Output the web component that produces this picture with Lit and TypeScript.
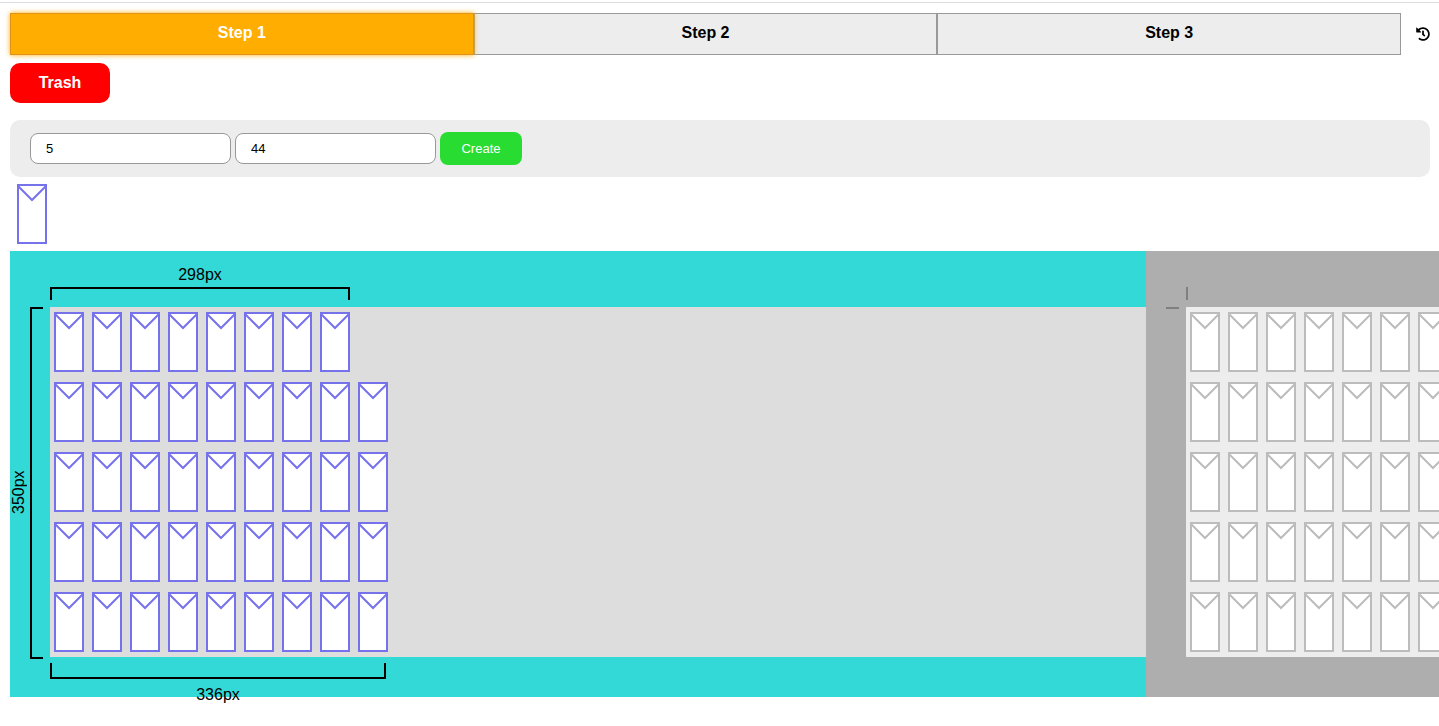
import { LitElement, html, css, svg } from "lit";
import { customElement, property, state } from "lit/decorators.js";
import { classMap } from "lit/directives/class-map.js";

@customElement("envelope-card")
class EnvelopeCard extends LitElement {
  static styles = css`
    :host {
      display: block;
      flex: none;
      width: 30px;
      height: 60px;
      margin: 5px 4px;
      color: #7672ec;
    }
    .shape {
      display: block;
      width: 100%;
      height: 100%;
    }
  `;

  render() {
    return html`<svg class="shape" viewBox="0 0 30 60" aria-hidden="true">
      <rect x="1" y="1" width="28" height="58" fill="#fff" stroke="currentColor" stroke-width="2" />
      <path d="M1 2L15 16L29 2" fill="none" stroke="currentColor" stroke-width="2" />
    </svg>`;
  }
}

@customElement("envelope-board")
class EnvelopeBoard extends LitElement {
  @property({ attribute: false }) rows: number[] = [];
  @property({ type: Boolean, reflect: true }) inactive = false;

  static styles = css`
    :host {
      display: grid;
      grid-template-columns: 20px 20px minmax(0, 1fr);
      grid-template-rows: 36px 20px auto 40px;
      background: #33d9d6;
      color: #000;
    }
    :host([inactive]) {
      background: #aeaeae;
      color: #808080;
    }
    .field {
      grid-column: 3;
      grid-row: 3;
      background: #dddddd;
    }
    :host([inactive]) .field {
      background: #ededed;
    }
    :host([inactive]) envelope-card {
      color: #bcbcbc;
    }
    .row {
      display: flex;
    }
    .label {
      text-align: center;
      line-height: 20px;
    }
    .top-label {
      grid-column: 3;
      grid-row: 1;
      align-self: end;
      padding-bottom: 2px;
    }
    .top {
      grid-column: 3;
      grid-row: 2;
      height: 13px;
      box-sizing: border-box;
      border: 2px solid;
      border-bottom: 0;
    }
    .side-label {
      grid-column: 1;
      grid-row: 3;
      justify-self: start;
      writing-mode: vertical-rl;
      transform: rotate(180deg);
      line-height: 18px;
      padding-bottom: 20px;
    }
    .side {
      grid-column: 2;
      grid-row: 3;
      width: 13px;
      box-sizing: border-box;
      margin-bottom: -2px;
      border: 2px solid;
      border-right: 0;
    }
    .bottom {
      grid-column: 3;
      grid-row: 4;
      height: 40px;
      padding-top: 6px;
      box-sizing: border-box;
    }
    .bracket {
      height: 16px;
      box-sizing: border-box;
      border: 2px solid;
      border-top: 0;
      margin-bottom: 6px;
    }
    .tick-top {
      grid-column: 3;
      grid-row: 2;
      width: 2px;
      height: 13px;
      background: currentColor;
    }
    .tick-side {
      grid-column: 2;
      grid-row: 3;
      width: 13px;
      height: 2px;
      background: currentColor;
    }
  `;

  private renderRulers() {
    if (this.inactive) {
      return html`<div class="tick-top"></div><div class="tick-side"></div>`;
    }
    const first = this.rows[0] * 38 - 6;
    const last = this.rows[this.rows.length - 1] * 38 - 6;
    return html`
      <div class="label top-label" style="width:${first + 2}px">${first}px</div>
      <div class="top" style="width:${first + 2}px"></div>
      <div class="label side-label">${this.rows.length * 70}px</div>
      <div class="side"></div>
      <div class="bottom" style="width:${last}px">
        <div class="bracket"></div>
        <div class="label">${last}px</div>
      </div>
    `;
  }

  render() {
    return html`
      ${this.renderRulers()}
      <div class="field">
        ${this.rows.map(
          (count) => html`<div class="row">
            ${Array.from({ length: count }, () => html`<envelope-card></envelope-card>`)}
          </div>`
        )}
      </div>
    `;
  }
}

const historyIcon = svg`<path fill="currentColor" d="M504 255.531c.253 136.64-111.18 248.372-247.82 248.468-59.015.042-113.223-20.53-155.822-54.911-11.077-8.94-11.905-25.541-1.839-35.607l11.267-11.267c8.609-8.609 22.353-9.551 31.891-1.984C173.062 425.135 212.781 440 256 440c101.705 0 184-82.311 184-184 0-101.705-82.311-184-184-184-48.814 0-93.149 18.969-126.068 49.932l50.754 50.754c10.08 10.08 2.941 27.314-11.313 27.314H24c-8.837 0-16-7.163-16-16V38.627c0-14.254 17.234-21.393 27.314-11.314l49.372 49.372C129.209 34.136 189.552 8 256 8c136.81 0 247.747 110.78 248 247.531zm-180.912 78.784l9.823-12.63c8.138-10.463 6.253-25.542-4.21-33.679L288 256.349V152c0-13.255-10.745-24-24-24h-16c-13.255 0-24 10.745-24 24v135.651l65.409 50.874c10.463 8.137 25.541 6.253 33.679-4.21z"/>`;

@customElement("app-root")
class AppRoot extends LitElement {
  @state() private step = 0;
  @state() private rows = [8, 9, 9, 9, 9];

  static styles = css`
    :host {
      display: block;
      box-sizing: border-box;
      min-height: 100vh;
      padding: 2px 0 20px;
      overflow-x: clip;
      background: #fff;
      color: #000;
      font: 16px/20px "Liberation Sans", Arial, sans-serif;
    }
    button,
    input {
      font-family: inherit;
      margin: 0;
      box-sizing: border-box;
    }
    button {
      border: 0;
      cursor: pointer;
    }
    .header {
      display: flex;
      align-items: center;
      gap: 15px;
      border-top: 1px solid #dcdde0;
      padding: 10px 9px 0 10px;
    }
    .steps {
      display: flex;
      flex: 1;
    }
    .step {
      flex: 1 1 0;
      height: 42px;
      padding: 0 0 2px;
      border: 1px solid #999;
      background: #ededed;
      color: #000;
      font-size: 16px;
      font-weight: 700;
    }
    .step.active {
      position: relative;
      background: #ffad00;
      border-color: #e0921a;
      color: #fff;
      box-shadow: 0 0 5px #ffad00;
    }
    .history {
      display: flex;
      padding: 0;
      background: none;
      color: #000;
    }
    .history svg {
      width: 14px;
      height: 14px;
    }
    .content {
      padding: 8px 9px 0 10px;
    }
    .trash {
      display: block;
      width: 100px;
      height: 40px;
      border-radius: 10px;
      background: #f00;
      color: #fff;
      font-size: 16px;
      font-weight: 700;
    }
    .toolbar {
      display: flex;
      align-items: center;
      gap: 4px;
      margin-top: 17px;
      padding: 12px 20px;
      border-radius: 10px;
      background: #ededed;
    }
    .count {
      width: 201px;
      height: 31px;
      padding: 0 15px;
      border: 1px solid #999;
      border-radius: 8px;
      background: #fff;
      color: #000;
      font-size: 13px;
    }
    .create {
      width: 82px;
      height: 33px;
      border-radius: 8px;
      background: #28dc32;
      color: #fff;
      font-size: 13px;
    }
    .palette {
      display: flex;
      padding: 2px 3px;
    }
    .boards {
      display: flex;
      margin-left: 10px;
    }
    .board-main {
      flex: 0 0 79.5%;
      min-width: 0;
    }
    .board-next {
      flex: 0 0 79.5%;
      min-width: 0;
    }
  `;

  private create(event: Event) {
    event.preventDefault();
    const data = new FormData(event.target as HTMLFormElement);
    const rows = Math.max(1, Number(data.get("rows")));
    const total = Math.max(rows, Number(data.get("total")));
    const base = Math.floor(total / rows);
    const extra = total % rows;
    this.rows = Array.from({ length: rows }, (_, i) => base + (i >= rows - extra ? 1 : 0));
  }

  render() {
    return html`
      <header class="header">
        <nav class="steps" aria-label="Steps">
          ${[0, 1, 2].map(
            (i) => html`<button
              type="button"
              class=${classMap({ step: true, active: this.step === i })}
              @click=${() => (this.step = i)}
            >Step ${i + 1}</button>`
          )}
        </nav>
        <button class="history" type="button" aria-label="History">
          <svg viewBox="0 0 512 512" aria-hidden="true">${historyIcon}</svg>
        </button>
      </header>
      <main>
        <div class="content">
          <button class="trash" type="button">Trash</button>
          <form class="toolbar" @submit=${this.create}>
            <input class="count" name="rows" type="text" inputmode="numeric" aria-label="Rows" value="5" />
            <input class="count" name="total" type="text" inputmode="numeric" aria-label="Total" value="44" />
            <button class="create" type="submit">Create</button>
          </form>
          <div class="palette"><envelope-card></envelope-card></div>
        </div>
        <div class="boards">
          <envelope-board class="board-main" .rows=${this.rows}></envelope-board>
          <envelope-board class="board-next" inactive .rows=${this.rows}></envelope-board>
        </div>
      </main>
    `;
  }
}
